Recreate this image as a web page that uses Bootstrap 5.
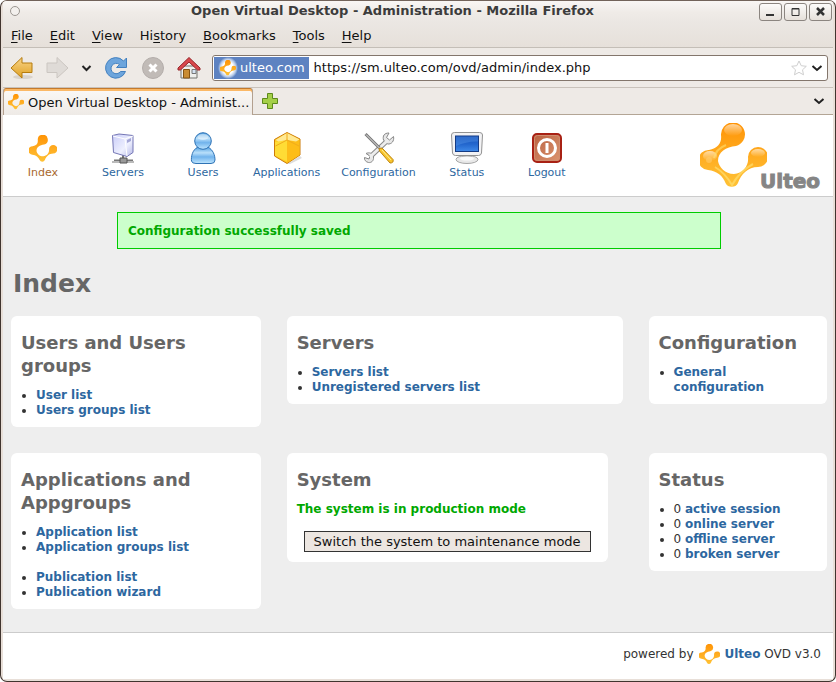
<!DOCTYPE html>
<html lang="en">
<head>
<meta charset="utf-8">
<meta name="viewport" content="width=device-width, initial-scale=1">
<title>Open Virtual Desktop - Administration</title>
<link href="https://cdn.jsdelivr.net/npm/bootstrap@5.3.0/dist/css/bootstrap.min.css" rel="stylesheet">
<style>
body{font-family:"DejaVu Sans",sans-serif;font-size:12px;line-height:15px;color:#333;background:#fff}
a{color:#2d67a0;text-decoration:none}
svg{display:block;flex:none}
button{font-family:inherit;color:inherit}
.win{border:1px solid #41352f;border-top-color:#72635a;border-radius:7px;padding:0 2px 2px;background:#e8dfd8;overflow:hidden}
.bare{border:0;background:none;padding:0}
.chrome{font-size:14px;color:#111;background:#eeeae6}
.topbars{background:linear-gradient(#f9f6f4,#efebe7 25%,#ebe7e3 45%,#e6e0da);border-bottom:1px solid #c4beb7}
.titlebar{height:22px;padding:0 1px 0 7px}
.titletext{font-size:13px;line-height:20px;color:#3c3c3c}
.wbtns{gap:2px;padding-top:2px}
.wbtn{width:23px;height:18px;border:1px solid #8b8580;border-radius:3px;background:linear-gradient(#fcfbfa,#e6e0da)}
.menus{height:24px;padding:0 8px;gap:17px;font-size:13px}
.menus u{text-underline-offset:2px}
.tools{height:40px;padding:0 5px 0 7px;border-bottom:1px solid #c9c2bb}
.urlbox{height:26px;border:1px solid #83766c;border-radius:3px;background:#fff;padding:1px}
.site{height:22px;background:#5d82c1;color:#fff;font-size:13px;padding:0 2px 0 1px;gap:2px}
.glow{background:radial-gradient(closest-side,#fff 55%,#b8cbe8 80%,#5d82c1)}
.urlbox input{border:0;outline:0;font-size:13px;color:#111;padding:0 5px;background:transparent;min-width:0}
.tabs{height:27px;border-bottom:1px solid #b3a595}
.tab{width:250px;height:27px;border:1px solid #b3a08f;border-top:0;border-bottom:0;box-shadow:inset 0 1px #c47a2c,inset 0 3px #fbb967;border-radius:3px 3px 0 0;background:linear-gradient(#fbf9f7,#eeeae6);color:#111;font-size:13px;padding:3px 0 0 4px;gap:3px}
.apphead{height:82px;background:#fff;border-bottom:1px solid #ccc}
.appnav{padding-top:17px}
.appnav a{min-width:80px;padding:0 10px;font-size:11px;line-height:14px;gap:2px}
.appnav a.wide{padding:0 11px}
.appnav a.current{color:#a9682d}
.brand{padding:8px 13px 0 0}
.brand span{font-size:20px;line-height:20px;font-weight:700;color:#858585;margin:0 0 5px -8px;-webkit-text-stroke:1px #858585}
.page{background:#eee;padding:15px 6px 23px 8px}
.notice{width:74%;background:#cfc;border:1px solid #0c0;color:#00a800;padding:11px 10px 9px;margin-left:106px}
.page h1{font-size:25px;line-height:30px;font-weight:700;color:#666;margin:20px 2px 17px}
.boards{display:grid;grid-template-columns:249fr 335fr 178fr;gap:26px;align-items:start}
.board{background:#fff;border-radius:6px;padding:15px 10px 9px}
.board h2{font-size:18px;line-height:23px;font-weight:700;color:#666;margin:0 0 11px}
.board ul{margin:0;padding-left:15px}
.board ul+ul{margin-top:15px}
.system{margin-right:15px;padding-bottom:10px}
.okay{color:#00a800}
.mode{border:1px solid #333;background:#ece6e1;color:#111;font-size:13px;line-height:19px;padding:0 9px;margin-top:14px}
.foot{background:#fff;border-top:1px solid #ccc;padding:0 12px 4px;gap:5px}
</style>
<script src="https://cdn.jsdelivr.net/npm/bootstrap@5.3.0/dist/js/bootstrap.bundle.min.js"></script>
</head>
<body>
<svg width="0" height="0" class="position-absolute" aria-hidden="true">
<defs>
<linearGradient id="or" x1="0" y1="0" x2="0" y2="1"><stop offset="0" stop-color="#ff9305"/><stop offset=".5" stop-color="#ffab20"/><stop offset="1" stop-color="#ffc235"/></linearGradient>
<linearGradient id="gold" x1="0" y1="0" x2="0" y2="1"><stop offset="0" stop-color="#f9d58a"/><stop offset="1" stop-color="#dfa022"/></linearGradient>
<linearGradient id="srv" x1="0" y1="0" x2="1" y2="1"><stop offset="0" stop-color="#c9ccf7"/><stop offset=".6" stop-color="#eef0ff"/><stop offset="1" stop-color="#b6b9e6"/></linearGradient>
<linearGradient id="usr" x1="0" y1="0" x2="0" y2="1"><stop offset="0" stop-color="#4f9fe0"/><stop offset=".35" stop-color="#b9dffa"/><stop offset=".6" stop-color="#71b3ec"/><stop offset="1" stop-color="#bfe6ff"/></linearGradient>
<linearGradient id="scr" x1="0" y1="0" x2="0" y2="1"><stop offset="0" stop-color="#1450b8"/><stop offset=".55" stop-color="#2468cf"/><stop offset="1" stop-color="#3f8ae8"/></linearGradient>
<linearGradient id="red" x1="0" y1="0" x2="1" y2="1"><stop offset="0" stop-color="#b8603f"/><stop offset="1" stop-color="#dd9672"/></linearGradient>
<linearGradient id="shine" x1="0" y1="0" x2="0" y2="1"><stop offset="0" stop-color="#fff" stop-opacity=".6"/><stop offset="1" stop-color="#fff" stop-opacity="0"/></linearGradient>
<symbol id="ulteo" viewBox="0 0 67 67"><path fill="url(#or)" d="M21 12C22 20 18 25 9 27A10 10 0 0 0 8 47C17 48 23 53 25.500 60A7 7 0 0 0 38 60C41 51 48 44 58 44A10 10 0 1 0 48 34C49 43 43 50 34 51C25 51 19 44 18 38C18 29 26 24 36 23A12 12 0 1 0 21 12Z"/></symbol>
</defs>
</svg>

<div class="win min-vh-100 d-flex flex-column">
<header class="chrome">
  <div class="topbars">
    <div class="titlebar d-flex align-items-start">
      <svg class="mt-1" width="12" height="12" viewBox="0 0 12 12"><circle cx="5" cy="6" r="4.500" fill="#f3f0ed" stroke="#9b9691"/></svg>
      <div class="titletext flex-fill text-center fw-bold ps-1">Open Virtual Desktop - Administration - Mozilla Firefox</div>
      <div class="wbtns d-flex">
        <button class="wbtn p-0" aria-label="Minimize"><svg width="21" height="16"><path d="M6 11h8" stroke="#333" stroke-width="2"/></svg></button>
        <button class="wbtn p-0" aria-label="Maximize"><svg width="21" height="16"><path d="M7 4.500h7v7h-7ZM7 5h7" fill="none" stroke="#333"/></svg></button>
        <button class="wbtn p-0" aria-label="Close"><svg width="21" height="16"><path d="M7 4l7 7M14 4l-7 7" stroke="#333" stroke-width="2.500"/></svg></button>
      </div>
    </div>
    <nav class="menus d-flex align-items-center">
      <button class="bare"><u>F</u>ile</button><button class="bare"><u>E</u>dit</button><button class="bare"><u>V</u>iew</button><button class="bare">Hi<u>s</u>tory</button><button class="bare"><u>B</u>ookmarks</button><button class="bare"><u>T</u>ools</button><button class="bare"><u>H</u>elp</button>
    </nav>
  </div>
  <div class="tools d-flex align-items-center">
    <button class="bare me-2" aria-label="Back"><svg width="24" height="24"><ellipse cx="13" cy="21" rx="10" ry="2" fill="#d9d3cc"/><path d="M1 12L12 1.500V7H22V16.500H12V22Z" fill="url(#gold)" stroke="#b67c0e"/></svg></button>
    <button class="bare me-2" aria-label="Forward"><svg width="28" height="24"><path d="M26 12L15 1.500V7H5V16.500H15V22Z" fill="#dfdbd7" stroke="#cbc6c1"/></svg></button>
    <button class="bare me-2" aria-label="Recent pages"><svg width="18" height="24"><path d="M4.500 10l4 4 4-4" fill="none" stroke="#222" stroke-width="2"/></svg></button>
    <button class="bare me-2" aria-label="Reload"><svg width="28" height="24"><path d="M19.500 5L22.500 2V11.500H12.500L15.500 8.500A5.200 5.200 0 1 0 16.500 15.500H21.500A10.300 10.300 0 1 1 19.500 5Z" fill="#6da5dc" stroke="#4380bf"/></svg></button>
    <button class="bare me-2" aria-label="Stop"><svg width="28" height="24"><circle cx="13" cy="12" r="10.500" fill="#c1bbb7" stroke="#b3adaa"/><path d="M9.500 8.500l7 7M16.500 8.500l-7 7" stroke="#fff" stroke-width="3"/></svg></button>
    <button class="bare me-2" aria-label="Home"><svg width="28" height="24"><path d="M5 10h16v12H5Z" fill="#efefec" stroke="#72726f"/><path d="M2 12L13 1.500 24 12V14H21.500L13 6 4.500 14H2Z" fill="#d9484c" stroke="#96262b"/><path d="M7.500 13.500h6V22h-6Z" fill="#c98b32" stroke="#845313"/><path d="M16 13.500h4v4h-4Z" fill="#d6e3f2" stroke="#777"/></svg></button>
    <div class="urlbox d-flex align-items-center flex-fill">
      <button class="bare site d-flex align-items-center px-1"><span class="glow"><svg width="20" height="22" viewBox="-8 -12 83 91"><use href="#ulteo" width="67" height="67"/></svg></span>ulteo.com</button>
      <input class="flex-fill" type="text" aria-label="Address" value="https://sm.ulteo.com/ovd/admin/index.php">
      <svg width="18" height="18"><path d="M9 2l2.200 4.700 5.100.6-3.800 3.500 1 5L9 13.300l-4.500 2.500 1-5L1.700 7.300l5.100-.6Z" fill="#fff" stroke="#cfcfcf"/></svg>
      <button class="bare" aria-label="Show history"><svg width="18" height="18"><path d="M4.500 7l4.500 4 4.500-4" fill="none" stroke="#222" stroke-width="2"/></svg></button>
    </div>
  </div>
  <div class="tabs d-flex align-items-center">
    <a class="tab d-flex align-items-center text-nowrap" href="#"><svg width="17" height="17"><use href="#ulteo" width="16" height="16"/></svg>Open Virtual Desktop - Administ...</a>
    <button class="bare ms-2" aria-label="New tab"><svg width="18" height="18"><path d="M6.500 1.500h5v5h5v5h-5v5h-5v-5h-5v-5h5Z" fill="#a4cf48" stroke="#5c891b"/></svg></button>
    <button class="bare ms-auto me-1" aria-label="List all tabs"><svg width="20" height="18"><path d="M5.500 7l4.500 4 4.500-4" fill="none" stroke="#222" stroke-width="2"/></svg></button>
  </div>
</header>

<div class="apphead d-flex justify-content-between">
  <nav class="appnav d-flex align-items-start">
    <a href="#" class="current d-flex flex-column align-items-center"><svg width="32" height="32" viewBox="0 0 32 32"><use href="#ulteo" x="2" y="3" width="28" height="28"/></svg>Index</a>
    <a href="#" class="d-flex flex-column align-items-center"><svg width="32" height="32"><path d="M16 23v5M7 28.500h19" stroke="#777" stroke-width="2"/><path d="M5 30h22" stroke="#bbb" stroke-width="2"/><path d="M13 26h7v5h-7Z" fill="#999" stroke="#555"/><path d="M5.500 3.500L12 2l14 1.500V20.500L20 24.500 6.500 20.500Z" fill="url(#srv)" stroke="#7577b5"/><path d="M6 4l12 3L26 4M18 7l2 17" fill="none" stroke="#fff"/><path d="M20 8l4-2v3l-4 2Z" fill="#a4a6d6"/></svg>Servers</a>
    <a href="#" class="d-flex flex-column align-items-center"><svg width="32" height="32"><path d="M11 15C5 18 4 25 4.500 29Q5 31.500 9 31.500H24Q28 31.500 28 28C28 23 26 18 21 15Z" fill="url(#usr)" stroke="#2f73b5"/><circle cx="16" cy="9" r="8.300" fill="url(#usr)" stroke="#2f73b5"/><ellipse cx="16" cy="5" rx="5.500" ry="3" fill="#fff" opacity=".45"/></svg>Users</a>
    <a href="#" class="d-flex flex-column align-items-center"><svg width="32" height="32"><path d="M16 32L29 24l2 2-12 6Z" fill="#ddd"/><path d="M16 .5L29 7V23L16 31.500 3.500 24V7.500Z" fill="#ffc91f" stroke="#cc7b08"/><path d="M4 10l12-2 1 22L4 23.500Z" fill="#ffdc35"/><path d="M16 8l12.500 0v15L16 31Z" fill="#fdbd18"/><path d="M16 1L4.500 8l3 1.500L16 8l9 1.500 3.500-2Z" fill="#ffe993"/><path d="M16 1v7L4.500 14M16 8l12 6" fill="none" stroke="#f0ab1b"/></svg>Applications</a>
    <a href="#" class="wide d-flex flex-column align-items-center"><svg width="32" height="32"><path d="M7 25L25 8" stroke="#888" stroke-width="5"/><path d="M26 1C21 1 19.500 4 20.500 8l4 4c4 .5 7-3 6-7.500l-4 3.500-3-2.500ZM5.500 30.500C8 31 11 29 10.500 25 10 21 6 20 3 21.500L7 24 6 27 1.500 25.500C1 28 3 30 5.500 30.500Z" fill="#e7e7e7" stroke="#888"/><path d="M7 25L25 8" stroke="#ededed" stroke-width="3"/><path d="M2.500 2l14 14" stroke="#777" stroke-width="3"/><path d="M3 2.500l14 14" stroke="#e5e5e5"/><path d="M16 16.500l3-.5L30 27.500q1 3.500-3 3.500L16.500 19Z" fill="#f8c52c" stroke="#bd8410"/><path d="M19 18l9 10" stroke="#fff09a"/></svg>Configuration</a>
    <a href="#" class="d-flex flex-column align-items-center"><svg width="32" height="32"><ellipse cx="16" cy="27.500" rx="11" ry="4" fill="#e8e8e8" stroke="#a5a5a5"/><path d="M11 22h10v4H11Z" fill="#b5b5b5"/><ellipse cx="16" cy="26.500" rx="7" ry="2" fill="#fafafa"/><path d="M3.500 .5H28.500Q31.500 .5 31.500 3L30.500 21Q30 23.500 27.500 23.500H4.500Q2 23.500 1.500 21L.5 3Q.5 .5 3.500 .5Z" fill="#f2f2f4" stroke="#929292"/><rect x="4.500" y="4" width="23" height="15.500" fill="url(#scr)" stroke="#153b83"/><path d="M5 4.500h22v5Q16 9 5 14Z" fill="#6cabf5" opacity=".3"/></svg>Status</a>
    <a href="#" class="d-flex flex-column align-items-center"><svg width="32" height="32"><rect x="2" y="2" width="28" height="28" rx="4" fill="url(#red)" stroke="#a82114" stroke-width="2"/><rect x="3.500" y="3.500" width="25" height="25" rx="3" fill="none" stroke="#d08e70"/><circle cx="16" cy="16" r="8.500" fill="none" stroke="#fff" stroke-width="3"/><path d="M16 11v10" stroke="#fff" stroke-width="3"/></svg>Logout</a>
  </nav>
  <a href="#" class="brand d-flex align-items-start" aria-label="Ulteo">
    <svg width="68" height="67" viewBox="0 0 68 67"><use href="#ulteo" width="67" height="67"/><ellipse cx="33" cy="7" rx="9" ry="6" fill="url(#shine)"/><ellipse cx="58" cy="30" rx="7" ry="4" fill="url(#shine)"/><ellipse cx="10" cy="33" rx="7" ry="5" fill="url(#shine)"/><circle cx="9" cy="37" r="3" fill="#ffd27a" opacity=".5"/><path d="M15 44Q25 50 32 62Q40 48 53 41" fill="none" stroke="#ffe478" stroke-width="2" opacity=".6"/><path d="M26 22Q16 26 14 35" fill="none" stroke="#ffdf70" stroke-width="2" opacity=".6"/></svg>
    <span class="align-self-end">Ulteo</span>
  </a>
</div>

<main class="page flex-fill">
  <div class="notice fw-bold" role="status">Configuration successfully saved</div>
  <h1>Index</h1>
  <div class="boards">
    <section class="board"><h2>Users and Users groups</h2><ul class="fw-bold"><li><a href="#">User list</a></li><li><a href="#">Users groups list</a></li></ul></section>
    <section class="board"><h2>Servers</h2><ul class="fw-bold"><li><a href="#">Servers list</a></li><li><a href="#">Unregistered servers list</a></li></ul></section>
    <section class="board"><h2>Configuration</h2><ul class="fw-bold"><li><a href="#">General configuration</a></li></ul></section>
    <section class="board"><h2>Applications and Appgroups</h2><ul class="fw-bold"><li><a href="#">Application list</a></li><li><a href="#">Application groups list</a></li></ul><ul class="fw-bold"><li><a href="#">Publication list</a></li><li><a href="#">Publication wizard</a></li></ul></section>
    <section class="board system"><h2>System</h2><div class="okay fw-bold">The system is in production mode</div><div class="text-center"><button class="mode">Switch the system to maintenance mode</button></div></section>
    <section class="board"><h2>Status</h2><ul><li>0 <a class="fw-bold" href="#">active session</a></li><li>0 <a class="fw-bold" href="#">online server</a></li><li>0 <a class="fw-bold" href="#">offline server</a></li><li>0 <a class="fw-bold" href="#">broken server</a></li></ul></section>
  </div>
</main>
<footer class="foot d-flex align-items-center justify-content-end"><span>powered by</span><svg width="21" height="42" viewBox="0 0 21 42"><use href="#ulteo" y="11" width="21" height="21"/></svg><span><a class="fw-bold" href="#">Ulteo</a> OVD v3.0</span></footer>
</div>
</body>
</html>
